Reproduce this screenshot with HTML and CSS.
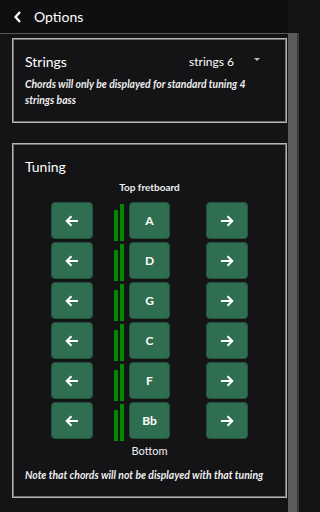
FILE: index.html
```html
<!DOCTYPE html>
<html>
<head>
<meta charset="utf-8">
<link rel="stylesheet" href="styles.css">
</head>
<body>
<div class="app">
  <header class="topbar">
    <svg class="back" width="10" height="12" viewBox="0 0 10 12"><path d="M7 1 L2.5 6 L7 11" fill="none" stroke="#fff" stroke-width="2.2"/></svg>
    <span class="title">Options</span>
  </header>
  <div class="body">
    <main class="content">
      <section class="card strings">
        <div class="row-head">
          <span class="card-title">Strings</span>
          <span class="select">strings 6<span class="caret"></span></span>
        </div>
        <p class="note">Chords will only be displayed for standard tuning 4 strings bass</p>
      </section>
      <section class="card tuning">
        <div class="card-title">Tuning</div>
        <div class="label top">Top fretboard</div>
        <div class="grid">
          <button class="btn"><svg width="14" height="12" viewBox="0 0 14 12"><path d="M13 6H2M6.5 1.2L1.7 6l4.8 4.8" fill="none" stroke="#fff" stroke-width="2"/></svg></button>
          <div class="bars"><i class="b1"></i><i class="b2"></i></div>
          <button class="btn note-btn">A</button>
          <button class="btn"><svg width="14" height="12" viewBox="0 0 14 12"><path d="M1 6h11M7.5 1.2L12.3 6l-4.8 4.8" fill="none" stroke="#fff" stroke-width="2"/></svg></button>

          <button class="btn"><svg width="14" height="12" viewBox="0 0 14 12"><path d="M13 6H2M6.5 1.2L1.7 6l4.8 4.8" fill="none" stroke="#fff" stroke-width="2"/></svg></button>
          <div class="bars"><i class="b1"></i><i class="b2"></i></div>
          <button class="btn note-btn">D</button>
          <button class="btn"><svg width="14" height="12" viewBox="0 0 14 12"><path d="M1 6h11M7.5 1.2L12.3 6l-4.8 4.8" fill="none" stroke="#fff" stroke-width="2"/></svg></button>

          <button class="btn"><svg width="14" height="12" viewBox="0 0 14 12"><path d="M13 6H2M6.5 1.2L1.7 6l4.8 4.8" fill="none" stroke="#fff" stroke-width="2"/></svg></button>
          <div class="bars"><i class="b1"></i><i class="b2"></i></div>
          <button class="btn note-btn">G</button>
          <button class="btn"><svg width="14" height="12" viewBox="0 0 14 12"><path d="M1 6h11M7.5 1.2L12.3 6l-4.8 4.8" fill="none" stroke="#fff" stroke-width="2"/></svg></button>

          <button class="btn"><svg width="14" height="12" viewBox="0 0 14 12"><path d="M13 6H2M6.5 1.2L1.7 6l4.8 4.8" fill="none" stroke="#fff" stroke-width="2"/></svg></button>
          <div class="bars"><i class="b1"></i><i class="b2"></i></div>
          <button class="btn note-btn">C</button>
          <button class="btn"><svg width="14" height="12" viewBox="0 0 14 12"><path d="M1 6h11M7.5 1.2L12.3 6l-4.8 4.8" fill="none" stroke="#fff" stroke-width="2"/></svg></button>

          <button class="btn"><svg width="14" height="12" viewBox="0 0 14 12"><path d="M13 6H2M6.5 1.2L1.7 6l4.8 4.8" fill="none" stroke="#fff" stroke-width="2"/></svg></button>
          <div class="bars"><i class="b1"></i><i class="b2"></i></div>
          <button class="btn note-btn">F</button>
          <button class="btn"><svg width="14" height="12" viewBox="0 0 14 12"><path d="M1 6h11M7.5 1.2L12.3 6l-4.8 4.8" fill="none" stroke="#fff" stroke-width="2"/></svg></button>

          <button class="btn"><svg width="14" height="12" viewBox="0 0 14 12"><path d="M13 6H2M6.5 1.2L1.7 6l4.8 4.8" fill="none" stroke="#fff" stroke-width="2"/></svg></button>
          <div class="bars"><i class="b1"></i><i class="b2"></i></div>
          <button class="btn note-btn">Bb</button>
          <button class="btn"><svg width="14" height="12" viewBox="0 0 14 12"><path d="M1 6h11M7.5 1.2L12.3 6l-4.8 4.8" fill="none" stroke="#fff" stroke-width="2"/></svg></button>
        </div>
        <div class="label bottom">Bottom</div>
        <p class="note">Note that chords will not be displayed with that tuning</p>
      </section>
    </main>
    <div class="scrollbar"></div>
  </div>
</div>
</body>
</html>
```
FILE: styles.css
```css
* { box-sizing: border-box; }
html, body { margin: 0; padding: 0; }
html { background: #141417; }
body {
  width: 299px;
  height: 512px;
  overflow: hidden;
  background: #141417;
  color: #fff;
  font-family: Lato, "Open Sans", sans-serif;
}
.app { display: flex; flex-direction: column; height: 512px; }
.topbar {
  height: 34px;
  flex: none;
  background: #0f0f11;
  border-bottom: 1px solid #5a5a5a;
  display: flex;
  align-items: center;
  padding-left: 13px;
  gap: 11px;
  margin-right: 11px;
}
.title { font-size: 14px; }
.body { flex: 1; display: flex; min-height: 0; }
.content {
  flex: 1;
  padding: 4px 1px 0 12px;
  display: flex;
  flex-direction: column;
  gap: 20px;
}
.scrollbar {
  width: 11px;
  flex: none;
  background: #5c5c5c;
  border-right: 2px solid #3c3c3c;
  margin-top: -1px;
}
.card {
  border: 1px solid #b5b5b5;
  box-shadow: inset 0 0 0 1px #6e6e6e;
  padding: 0 12px;
}
.strings { height: 85px; padding-top: 14px; }
.row-head { display: flex; align-items: center; height: 17px; }
.card-title { font-size: 14px; }
.row-head .card-title { flex: 1; }
.select { font-size: 12px; display: flex; align-items: center; }
.caret {
  width: 0; height: 0;
  border-left: 3.5px solid transparent;
  border-right: 3.5px solid transparent;
  border-top: 3.5px solid #bdbdbd;
  margin-left: 20px;
  margin-right: 14px;
  margin-top: -4px;
}
.note {
  margin: 0;
  font-size: 10.4px;
  font-style: italic;
  font-weight: 700;
  line-height: 16px;
  color: #eee;
}
.strings .note { margin-top: 6px; }
.tuning { height: 355px; padding-top: 14px; }
.tuning .card-title { height: 17px; line-height: 17px; }
.label {
  text-align: center;
  font-size: 10px;
  font-weight: 700;
  color: #eee;
}
.label.top { margin-top: 5px; line-height: 14px; margin-bottom: 8px; }
.label.bottom { margin-top: 5px; line-height: 14px; font-weight: 400; font-size: 11px; }
.tuning .note { margin-top: 9px; text-align: left; }
.grid {
  display: grid;
  grid-template-columns: 42px 31px 46px 78px;
  grid-auto-rows: 37px;
  row-gap: 3px;
  justify-content: center;
}
.grid > :nth-child(4n+2) { margin-left: 21px; }
.grid > :nth-child(4n+3) { margin-left: 5px; }
.grid > :nth-child(4n) { margin-left: 36px; }
.btn {
  background: #2f6e50;
  border: 1px solid #23533c;
  border-radius: 4px;
  color: #fff;
  font-family: inherit;
  font-size: 12px;
  font-weight: 700;
  display: flex;
  align-items: center;
  justify-content: center;
  padding: 0;
  width: 42px;
  height: 37px;
}
.note-btn { width: 41px; }
.bars {
  display: flex;
  gap: 2px;
  align-items: flex-end;
  height: 39px;
}
.bars i { display: block; width: 4px; background: #008a00; }
.bars .b1 { height: 31px; }
.bars .b2 { height: 37px; }
```
